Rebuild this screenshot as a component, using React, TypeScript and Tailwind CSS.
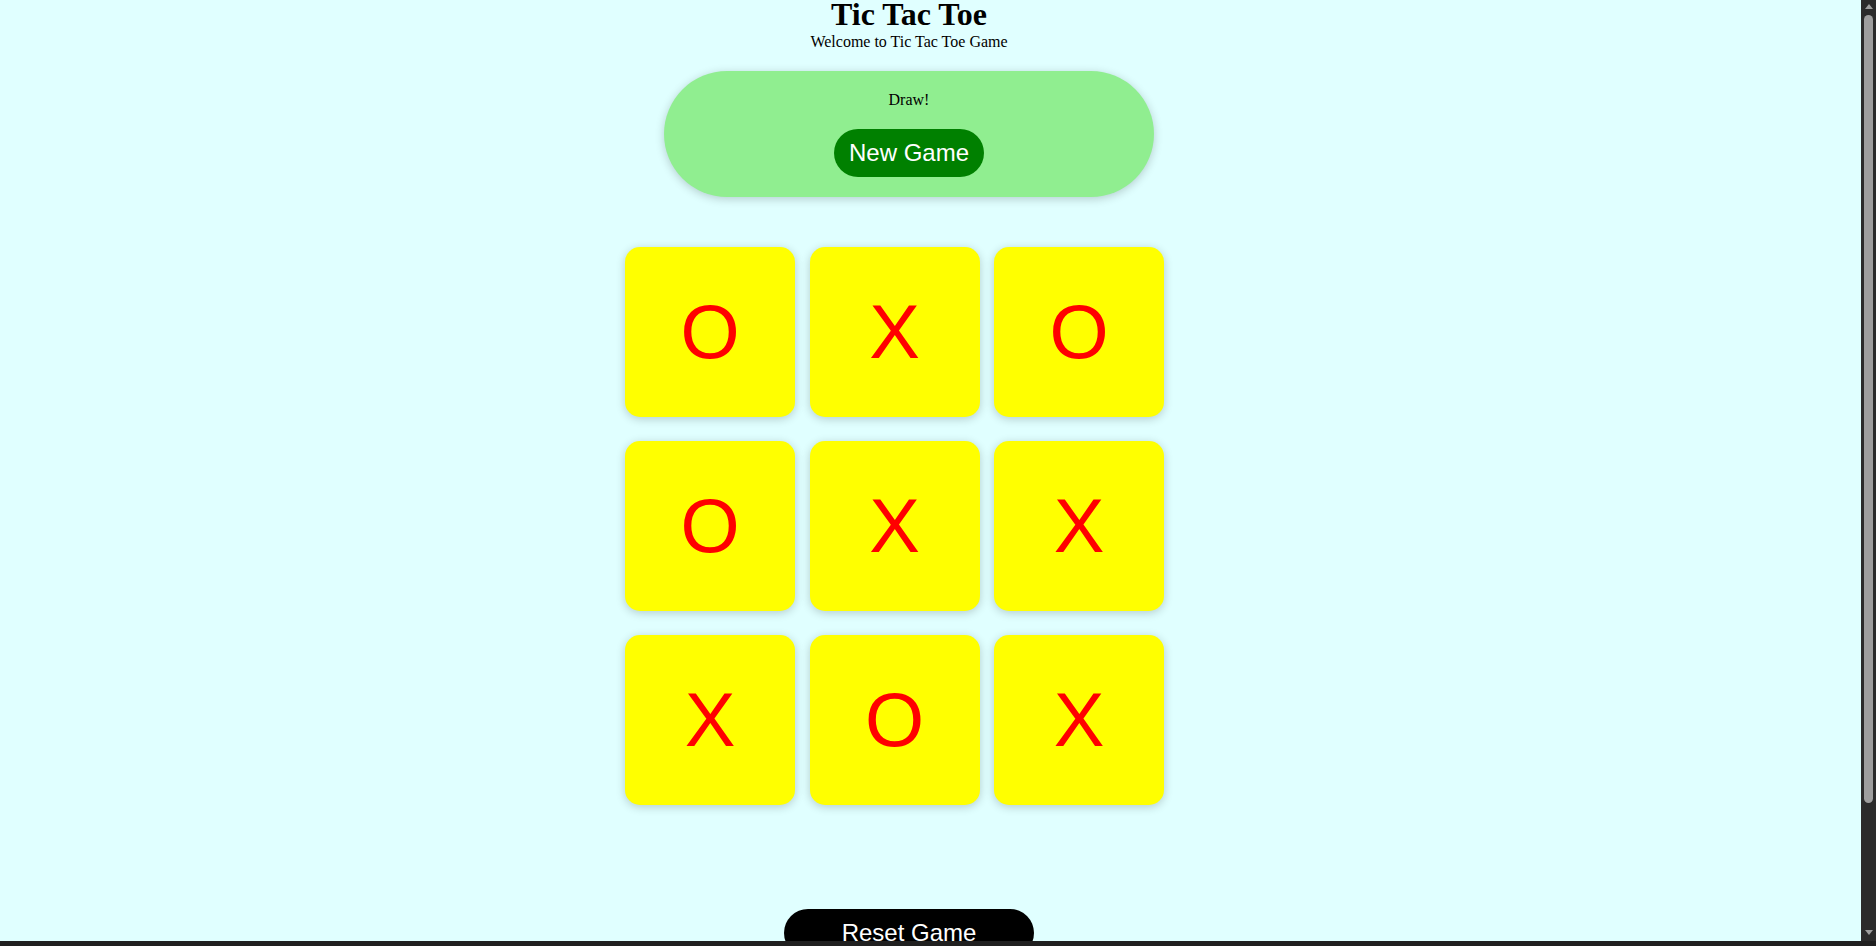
const board = ["O", "X", "O", "O", "X", "X", "X", "O", "X"];

function Cell({ value }: { value: string }) {
  return (
    <div className="flex h-[170px] w-[170px] items-center justify-center rounded-[15px] bg-[#ffff00] shadow-[0_2px_10px_rgba(0,0,0,0.2)]">
      <span className="font-['Liberation_Sans',Arial,sans-serif] text-[76px] text-[#ff0000]">
        {value}
      </span>
    </div>
  );
}

export default function App() {
  return (
    <div className="relative h-screen overflow-hidden bg-[#e0ffff]">
      <div className="flex w-[1818px] flex-col items-center font-['Liberation_Serif','Times_New_Roman',serif] text-black">
        <h1 className="m-0 text-[32px] leading-[28px] font-bold">Tic Tac Toe</h1>
        <p className="mt-[5px] text-[16px] leading-[18px]">Welcome to Tic Tac Toe Game</p>

        <div className="mt-[20px] flex h-[126px] w-[490px] flex-col items-center rounded-full bg-[#90ee90] pt-[20px] shadow-[0_2px_10px_rgba(0,0,0,0.2)]">
          <p className="text-[16px] leading-[18px]">Draw!</p>
          <button className="mt-[20px] h-[48px] rounded-full bg-[#008000] px-[15px] font-['Liberation_Sans',Arial,sans-serif] text-[24px] leading-[28px] text-white">
            New Game
          </button>
        </div>

        <div className="mt-[50px] mr-[29px] grid grid-cols-[repeat(3,170px)] gap-x-[14.5px] gap-y-[24px]">
          {board.map((v, i) => (
            <Cell key={i} value={v} />
          ))}
        </div>

        <button className="mt-[104px] h-[48px] w-[250px] shrink-0 rounded-[25px] bg-black py-[10px] font-['Liberation_Sans',Arial,sans-serif] text-[24px] leading-[28px] text-white">
          Reset Game
        </button>
      </div>

      {/* window scrollbar */}
      <div className="absolute top-0 right-0 h-[941px] w-[15px] bg-[#2b2b2b]">
        <div className="mx-auto mt-[4px] h-0 w-0 border-x-[4px] border-b-[5px] border-x-transparent border-b-[#9e9e9e]" />
        <div className="mx-auto mt-[6px] h-[788px] w-[9px] rounded-full bg-[#9e9e9e]" />
        <div className="mx-auto mt-[127px] h-0 w-0 border-x-[4px] border-t-[5px] border-x-transparent border-t-[#9e9e9e]" />
      </div>
      <div className="absolute right-0 bottom-0 left-0 h-[5px] bg-[#202020]" />
    </div>
  );
}
